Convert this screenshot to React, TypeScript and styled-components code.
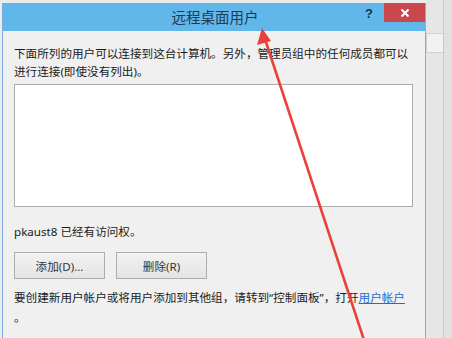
import React from "react";
import styled, { createGlobalStyle } from "styled-components";

const GlobalStyle = createGlobalStyle`
  html, body {
    margin: 0;
    padding: 0;
    width: 452px;
    height: 338px;
    overflow: hidden;
    background: #e8e8e8;
  }
  * { box-sizing: border-box; }
`;

const Screen = styled.div`
  position: relative;
  width: 452px;
  height: 338px;
  display: flex;
  padding-top: 3px;
  padding-left: 2px;
  background: #ebebeb;
  font-family: "Noto Sans", "Noto Sans CJK SC", sans-serif;
`;

const Dialog = styled.div`
  width: 424px;
  height: 100%;
  display: flex;
  flex-direction: column;
  border-left: 1px solid #7aaee0;
  border-right: 1px solid #7aaee0;
  background: #f0f0f0;
`;

const TitleBar = styled.div`
  height: 28px;
  background: #62b7ea;
  display: flex;
  align-items: flex-start;
`;

const Title = styled.div`
  flex: 1;
  text-align: center;
  padding-left: 73px;
  line-height: 28px;
  font-size: 14.5px;
  color: #1f3a55;
  font-family: "Noto Sans CJK SC", sans-serif;
`;

const Help = styled.div`
  width: 30px;
  line-height: 22px;
  text-align: center;
  font-size: 13px;
  font-weight: 700;
  color: #1d2f44;
  font-family: "Liberation Sans", sans-serif;
`;

const Close = styled.div`
  width: 41px;
  height: 19px;
  background: #c9484d;
  display: flex;
  align-items: center;
  justify-content: center;
`;

const Body = styled.div`
  padding: 14px 12px 0 11px;
  display: flex;
  flex-direction: column;
  font-size: 11.6px;
  color: #1b1b1b;
  font-family: "Noto Sans", "Noto Sans CJK SC", sans-serif;
`;

const Para = styled.div<{ mt?: number }>`
  line-height: 18px;
  margin-top: ${(p) => p.mt ?? 0}px;
  white-space: pre-wrap;
`;

const ListBox = styled.div`
  margin-top: 3px;
  height: 123px;
  background: #ffffff;
  border: 1px solid #acacac;
`;

const Buttons = styled.div`
  display: flex;
  gap: 11px;
  margin-top: 11px;
`;

const Button = styled.div`
  width: 91px;
  height: 27px;
  border: 1px solid #adadad;
  background: linear-gradient(#f2f2f2, #e4e4e4);
  display: flex;
  align-items: center;
  justify-content: center;
  color: #333;
  font-size: 11.6px;
`;

const Link = styled.span`
  color: #1a6fd3;
  text-decoration: underline;
`;

const Behind = styled.div`
  flex: 1;
  display: flex;
  margin-top: -3px;
`;

const BehindPane = styled.div`
  width: 18px;
  background: #e6e6e6;
  border-right: 1px solid #c8c8c8;
  display: flex;
  flex-direction: column;
`;

const BehindBox = styled.div`
  margin-top: 33px;
  height: 20px;
  border: 1px solid #d2d2d2;
  border-right: none;
  background: #f2f2f2;
`;

const BehindRest = styled.div`
  flex: 1;
  background: #e1e1e1;
`;

const Overlay = styled.svg`
  position: absolute;
  left: 0;
  top: 0;
  pointer-events: none;
`;

export default function App() {
  return (
    <>
      <GlobalStyle />
      <Screen>
        <Dialog>
          <TitleBar>
            <Title>远程桌面用户</Title>
            <Help>?</Help>
            <Close>
              <svg width="10" height="10" viewBox="0 0 10 10">
                <path d="M1.5 1.5 L8.5 8.5 M8.5 1.5 L1.5 8.5" stroke="#fff" strokeWidth="2" />
              </svg>
            </Close>
          </TitleBar>
          <Body>
            <Para>下面所列的用户可以连接到这台计算机。另外，管理员组中的任何成员都可以</Para>
            <Para>进行连接(即使没有列出)。</Para>
            <ListBox />
            <Para mt={16}>pkaust8 已经有访问权。</Para>
            <Buttons>
              <Button>添加(D)...</Button>
              <Button>删除(R)</Button>
            </Buttons>
            <Para mt={10}>
              要创建新用户帐户或将用户添加到其他组，请转到“控制面板”，打开<Link>用户帐户</Link>
            </Para>
            <Para mt={2}>。</Para>
          </Body>
        </Dialog>
        <Behind>
          <BehindPane>
            <BehindBox />
          </BehindPane>
          <BehindRest />
        </Behind>
        <Overlay width="452" height="338" viewBox="0 0 452 338">
          <line x1="364" y1="340" x2="264" y2="36" stroke="#e8413b" strokeWidth="2.6" />
          <path d="M262 28 L257 45 L271 41 Z" fill="#e8413b" />
        </Overlay>
      </Screen>
    </>
  );
}
